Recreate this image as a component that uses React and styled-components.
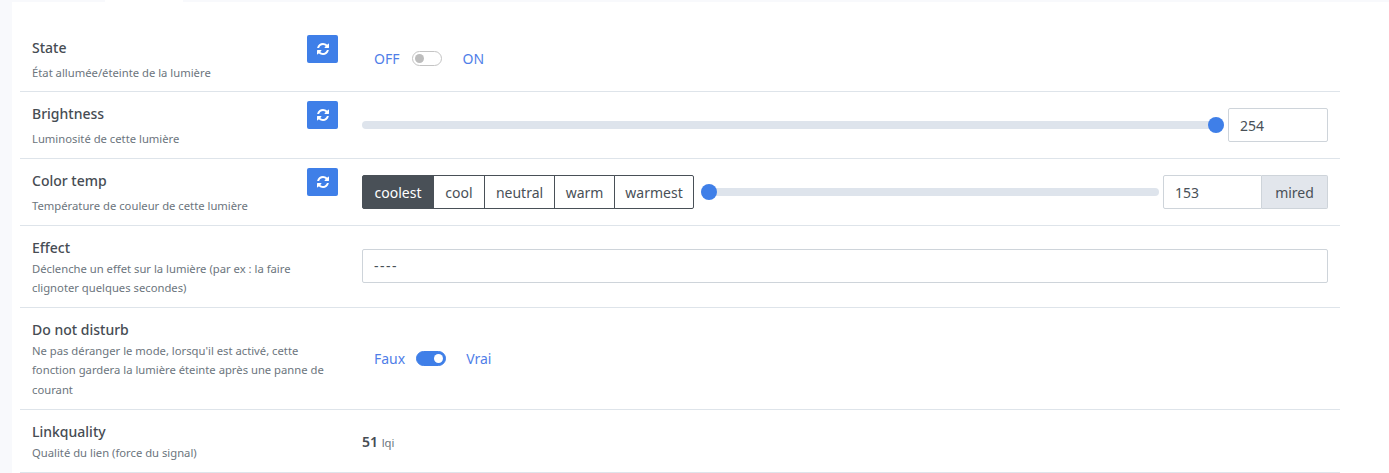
import React from "react";
import styled, { createGlobalStyle } from "styled-components";

const GlobalStyle = createGlobalStyle`
  html, body {
    margin: 0;
    padding: 0;
    background: #f8f9fc;
    font-family: "Noto Sans", "Open Sans", sans-serif;
    color: #495057;
  }
  * { box-sizing: border-box; }
`;

const Page = styled.div`
  width: 1389px;
  height: 473px;
  overflow: hidden;
  padding: 2px 0 0 12px;
`;

const Card = styled.div`
  position: relative;
  background: #fff;
  height: 100%;
  padding: 24px 0 0 8px;
`;

const ActiveTab = styled.div`
  position: absolute;
  top: -2px;
  left: 93px;
  width: 78px;
  height: 2px;
  background: #fff;
`;

const Row = styled.div`
  display: grid;
  grid-template-columns: 330px 1fr;
  width: 1320px;
  height: ${({ $height }) => $height}px;
  border-bottom: 1px solid #dee4ea;
`;

const LabelCol = styled.div`
  position: relative;
  padding: ${({ $top }) => $top}px 12px 0;
`;

const Title = styled.div`
  font-size: 14px;
  font-weight: 500;
  line-height: 21px;
  color: #464c53;
`;

const Description = styled.div`
  font-size: 11.25px;
  line-height: 19.5px;
  margin-top: ${({ $gap }) => $gap || 0}px;
  color: #6c757d;
`;

const RefreshButton = styled.button`
  position: absolute;
  top: 9px;
  right: 12px;
  width: 31px;
  height: 28px;
  padding: 0;
  border: 0;
  border-radius: 2px;
  background: #3f7fe8;
  color: #fff;
  display: flex;
  align-items: center;
  justify-content: center;
`;

const ValueCol = styled.div`
  display: flex;
  align-items: center;
  padding: 0 12px ${({ $bottom }) => $bottom || 0}px;
`;

const ToggleGroup = styled.div`
  display: flex;
  align-items: center;
  padding-left: 12px;
  font-size: 14px;
  color: #4f7ee8;
`;

const Track = styled.span`
  display: inline-flex;
  align-items: center;
  width: 30px;
  height: 15px;
  margin: 0 20px 0 ${({ $on }) => ($on ? 11 : 13)}px;
  padding: 0 2px;
  border-radius: 8px;
  border: 1px solid ${({ $on }) => ($on ? "#3f7fe8" : "#c4c4c4")};
  background: ${({ $on }) => ($on ? "#3f7fe8" : "#fff")};
  justify-content: ${({ $on }) => ($on ? "flex-end" : "flex-start")};
`;

const Knob = styled.span`
  width: 9px;
  height: 9px;
  border-radius: 50%;
  background: ${({ $on }) => ($on ? "#fff" : "#bdbdbd")};
`;

const Range = styled.input.attrs({ type: "range", readOnly: true })`
  flex: 1;
  min-width: 0;
  height: 16px;
  margin: 0 4px 0 ${({ $left }) => $left || 0}px;
  background: transparent;
  appearance: none;
  &::-webkit-slider-runnable-track {
    height: 8px;
    border-radius: 4px;
    background: #dee4ec;
  }
  &::-webkit-slider-thumb {
    appearance: none;
    width: 16px;
    height: 16px;
    margin-top: -4px;
    border: 0;
    border-radius: 50%;
    background: #3f7fe8;
  }
`;

const TextInput = styled.input.attrs({ readOnly: true })`
  width: ${({ $width }) => ($width ? `${$width}px` : "100%")};
  height: 34px;
  padding: 0 11px;
  font: inherit;
  font-size: 14px;
  letter-spacing: ${({ $spacing }) => $spacing || 0}px;
  color: #495057;
  background: #fff;
  border: 1px solid #ced4da;
  border-radius: ${({ $joined }) => ($joined ? "2px 0 0 2px" : "2px")};
  outline: none;
`;

const Addon = styled.span`
  display: flex;
  align-items: center;
  justify-content: center;
  width: 66px;
  height: 34px;
  font-size: 14px;
  color: #495057;
  background: #e2e6ec;
  border: 1px solid #ced4da;
  border-left: 0;
  border-radius: 0 2px 2px 0;
`;

const ButtonGroup = styled.div`
  display: flex;
  flex: none;
  height: 34px;
`;

const GroupButton = styled.button`
  width: ${({ $width }) => $width}px;
  height: 34px;
  padding: 0;
  margin-left: -1px;
  font: inherit;
  font-size: 14px;
  color: ${({ $active }) => ($active ? "#fff" : "#495057")};
  background: ${({ $active }) => ($active ? "#495057" : "#fff")};
  border: 1px solid #495057;
  &:first-child {
    margin-left: 0;
    border-radius: 2px 0 0 2px;
  }
  &:last-child {
    border-radius: 0 2px 2px 0;
  }
`;

const Measure = styled.div`
  font-size: 14px;
  font-weight: 600;
  color: #464c53;
  span {
    font-size: 11.25px;
    font-weight: 400;
    color: #6c757d;
  }
`;

const presets = [
  { label: "coolest", width: 72, active: true },
  { label: "cool", width: 52 },
  { label: "neutral", width: 71 },
  { label: "warm", width: 61 },
  { label: "warmest", width: 80 },
];

function Refresh() {
  return (
    <RefreshButton>
      <svg width="14" height="14" viewBox="0 0 1792 1792" fill="currentColor">
        <path d="M1639 1056q0 5-1 7-64 268-268 434.5t-478 166.5q-146 0-282.5-55t-243.5-157l-129 129q-19 19-45 19t-45-19-19-45v-448q0-26 19-45t45-19h448q26 0 45 19t19 45-19 45l-137 137q71 66 161 102t187 36q134 0 250-65t186-179q11-17 53-117 8-23 30-23h192q13 0 22.5 9.5t9.5 22.5zm25-800v448q0 26-19 45t-45 19h-448q-26 0-45-19t-19-45 19-45l138-138q-148-137-349-137-134 0-250 65t-186 179q-11 17-53 117-8 23-30 23h-199q-13 0-22.5-9.5t-9.5-22.5v-7q65-268 270-434.5t480-166.5q146 0 284 55.5t245 156.5l130-129q19-19 45-19t45 19 19 45z" />
      </svg>
    </RefreshButton>
  );
}

function Toggle({ off, on, checked }) {
  return (
    <ToggleGroup>
      {off}
      <Track $on={checked}>
        <Knob $on={checked} />
      </Track>
      {on}
    </ToggleGroup>
  );
}

export default function App() {
  return (
    <Page>
      <GlobalStyle />
      <Card>
        <ActiveTab />
        <Row $height={66}>
          <LabelCol $top={11}>
            <Title>State</Title>
            <Description $gap={5}>État allumée/éteinte de la lumière</Description>
            <Refresh />
          </LabelCol>
          <ValueCol>
            <Toggle off="OFF" on="ON" />
          </ValueCol>
        </Row>
        <Row $height={67}>
          <LabelCol $top={11}>
            <Title>Brightness</Title>
            <Description $gap={5}>Luminosité de cette lumière</Description>
            <Refresh />
          </LabelCol>
          <ValueCol>
            <Range min={0} max={254} defaultValue={254} />
            <TextInput $width={100} defaultValue="254" />
          </ValueCol>
        </Row>
        <Row $height={67}>
          <LabelCol $top={11}>
            <Title>Color temp</Title>
            <Description $gap={5}>Température de couleur de cette lumière</Description>
            <Refresh />
          </LabelCol>
          <ValueCol>
            <ButtonGroup>
              {presets.map((p) => (
                <GroupButton key={p.label} $active={p.active} $width={p.width}>
                  {p.label}
                </GroupButton>
              ))}
            </ButtonGroup>
            <Range $left={7} min={153} max={500} defaultValue={153} />
            <TextInput $width={99} $joined defaultValue="153" />
            <Addon>mired</Addon>
          </ValueCol>
        </Row>
        <Row $height={82}>
          <LabelCol $top={11}>
            <Title>Effect</Title>
            <Description $gap={0.5}>
              Déclenche un effet sur la lumière (par ex : la faire clignoter quelques secondes)
            </Description>
          </LabelCol>
          <ValueCol $bottom={2}>
            <TextInput $spacing={1.5} defaultValue="----" />
          </ValueCol>
        </Row>
        <Row $height={102}>
          <LabelCol $top={11}>
            <Title>Do not disturb</Title>
            <Description $gap={0.5}>
              Ne pas déranger le mode, lorsqu'il est activé, cette fonction gardera la lumière
              éteinte après une panne de courant
            </Description>
          </LabelCol>
          <ValueCol>
            <Toggle off="Faux" on="Vrai" checked />
          </ValueCol>
        </Row>
        <Row $height={63}>
          <LabelCol $top={11}>
            <Title>Linkquality</Title>
            <Description $gap={0.5}>Qualité du lien (force du signal)</Description>
          </LabelCol>
          <ValueCol>
            <Measure>
              51 <span>lqi</span>
            </Measure>
          </ValueCol>
        </Row>
      </Card>
    </Page>
  );
}
